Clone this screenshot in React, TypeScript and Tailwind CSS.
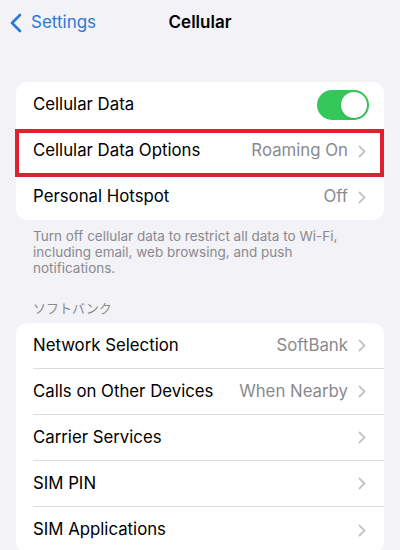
import React from "react";

const Chevron = () => (
  <svg width="8" height="13" viewBox="0 0 8 13" className="shrink-0">
    <path d="M1.5 1.5 L6.5 6.5 L1.5 11.5" fill="none" stroke="#c4c4c7" strokeWidth="1.8" strokeLinecap="round" strokeLinejoin="round" />
  </svg>
);

type RowProps = { label: string; value?: string; last?: boolean; chevron?: boolean; toggle?: boolean };

const Row = ({ label, value, last, chevron = true, toggle }: RowProps) => (
  <div className="flex h-[46px] items-center pl-[17px]">
    <div className={`flex h-full flex-1 items-center pr-[18px] ${last ? "" : "border-b border-[#dcdce0]"}`}>
      <span className="flex-1 text-[16.8px] text-black">{label}</span>
      {value && <span className="mr-[10px] text-[16.8px] text-[#8a8a8e]">{value}</span>}
      {toggle && (
        <div className="-mr-[3px] flex h-[30px] w-[52px] items-center justify-end rounded-full bg-[#34c759] p-[2px]">
          <div className="h-[26px] w-[26px] rounded-full bg-white shadow" />
        </div>
      )}
      {chevron && !toggle && <Chevron />}
    </div>
  </div>
);

export default function App() {
  return (
    <div
      className="h-[550px] w-[400px] overflow-hidden bg-[#f2f2f7]"
      style={{ fontFamily: "Inter, 'Noto Sans CJK JP', sans-serif" }}
    >
      <div className="relative flex h-[46px] items-center">
        <div className="flex items-center pl-[10px] text-[#2a79d8]">
          <svg width="12" height="20" viewBox="0 0 12 20" className="mr-[9px]">
            <path d="M10 2 L2 10 L10 18" fill="none" stroke="#2a79d8" strokeWidth="2.6" strokeLinecap="round" strokeLinejoin="round" />
          </svg>
          <span className="text-[17px]">Settings</span>
        </div>
        <div className="absolute left-0 right-0 top-0 flex h-[46px] items-center justify-center">
          <span className="text-[17px] font-semibold text-black">Cellular</span>
        </div>
      </div>

      <div className="mx-4 mt-[36px] rounded-[11px] bg-white">
        <Row label="Cellular Data" toggle last />
        <div className="relative">
          <Row label="Cellular Data Options" value="Roaming On" last />
          <div className="pointer-events-none absolute -left-px right-0 top-px h-[48px] border-[4.5px] border-[#e1202d]" />
        </div>
        <Row label="Personal Hotspot" value="Off" last />
      </div>

      <p className="mx-4 mt-[8px] px-[17px] text-[13.5px] leading-[16px] text-[#8a8a8e]">
        Turn off cellular data to restrict all data to Wi-Fi, including email, web browsing, and push notifications.
      </p>

      <div className="mx-4 mt-[24px] px-[17px] text-[13px] leading-[16px] text-[#8a8a8e]">ソフトバンク</div>

      <div className="mx-4 mt-[7px] rounded-[11px] bg-white">
        <Row label="Network Selection" value="SoftBank" />
        <Row label="Calls on Other Devices" value="When Nearby" />
        <Row label="Carrier Services" />
        <Row label="SIM PIN" />
        <Row label="SIM Applications" last />
      </div>
    </div>
  );
}
